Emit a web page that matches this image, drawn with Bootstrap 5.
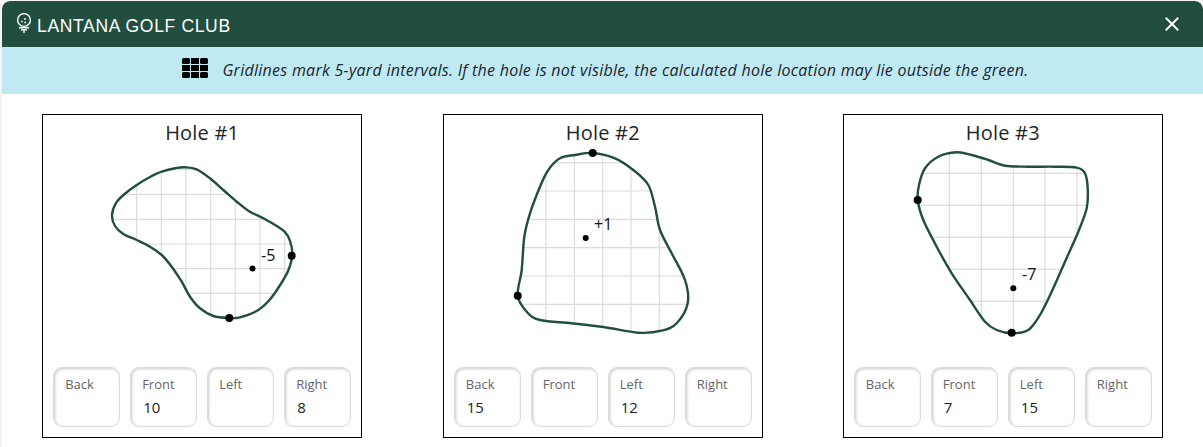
<!DOCTYPE html>
<html lang="en">
<head>
<meta charset="utf-8">
<title>Lantana Golf Club</title>
<link href="https://cdn.jsdelivr.net/npm/bootstrap@5.3.0/dist/css/bootstrap.min.css" rel="stylesheet">
<style>
html,body{height:447px;overflow:hidden;}
body{background:#f4f4f2;font-family:"Open Sans","Noto Sans",sans-serif;color:#212529;padding:1px 0 0 2px;}
.shell{border:0;border-radius:8px 8px 0 0;height:446px;overflow:hidden;background:#fff;}
.topbar{background:#214e3f;color:#fff;height:46px;padding:0 23px 0 14px;border:0;border-radius:8px 8px 0 0;}
.topbar .btn-close{opacity:1;}
.club{font-family:"Liberation Sans",sans-serif;font-size:17.5px;line-height:1;margin-top:5px;letter-spacing:.66px;}
.tee{width:16px;height:20px;margin-right:5px;margin-top:-8px;}
.notice{background:#bfeaf4;height:47px;padding:0 0 2px 6px;font-size:16px;letter-spacing:.27px;font-style:italic;border-radius:0;}
.grid-ico{width:26px;height:20px;margin-right:14px;margin-top:-3px;}
.holes{padding:20px 0 0;}
.holes>div{width:33.3333%;}
.hole{width:320px;height:324px;border:1px solid #000;border-radius:0;}
.mid-hole{margin-left:.6px;}
.hole h5{font-size:20px;letter-spacing:.2px;font-weight:400;line-height:24px;margin:6px 0 0;text-align:center;height:24px;}
.hole svg{display:block;width:318px;height:222px;}
.stats{gap:10px;padding:0 10px;}
.stat{width:67px;height:60px;border:1px solid #dcdcd8;border-radius:9px;box-shadow:inset 1px 1px 3px rgba(0,0,0,.22);padding:8px 0 0 11px;}
.stat span{display:block;font-size:13px;line-height:17px;color:#666;}
.stat b{display:block;font-weight:400;font-size:15px;line-height:18px;margin-top:5px;padding-left:1px;color:#222;}
.gridline{stroke:#dcdcd8;stroke-width:1.2;}
.edge{fill:none;stroke:#214e3f;stroke-width:2.4;}
.lbl{font-size:16px;fill:#111;font-family:"Open Sans",sans-serif;}
</style>
</head>
<body>
<div class="modal-content shell">
  <div class="modal-header topbar d-flex justify-content-between align-items-center">
    <div class="d-flex align-items-center club">
      <svg class="tee" viewBox="0 0 16 20" fill="none" stroke="#fff" stroke-width="1.4"><circle cx="8" cy="7" r="6.4"/><circle cx="6" cy="8.6" r=".9" fill="#fff" stroke="none"/><circle cx="9" cy="6" r=".9" fill="#fff" stroke="none"/><circle cx="9.2" cy="9.4" r=".9" fill="#fff" stroke="none"/><path d="M3 14.8h10M5 16.8h6M8 16.8V20"/></svg>
      LANTANA GOLF CLUB
    </div>
    <button type="button" class="btn-close btn-close-white" aria-label="Close"></button>
  </div>
  <div class="notice d-flex align-items-center justify-content-center">
    <svg class="grid-ico" viewBox="0 0 26 20" fill="#000"><rect x="0" y="0" width="8" height="6" rx="1.5"/><rect x="9" y="0" width="8" height="6"/><rect x="18" y="0" width="8" height="6" rx="1.5"/><rect x="0" y="7" width="8" height="6"/><rect x="9" y="7" width="8" height="6"/><rect x="18" y="7" width="8" height="6"/><rect x="0" y="14" width="8" height="6" rx="1.5"/><rect x="9" y="14" width="8" height="6"/><rect x="18" y="14" width="8" height="6" rx="1.5"/></svg>
    <span>Gridlines mark 5-yard intervals. If the hole is not visible, the calculated hole location may lie outside the green.</span>
  </div>
  <div class="holes d-flex">
    <div class="d-flex justify-content-center">
      <div class="card hole">
        <h5>Hole #1</h5>
        <svg class="green" viewBox="43 145 318 222"
          data-pts="112,215 116,203 124,194.5 136.7,185 150,177 161.7,171.7 175,168.3 185,167.3 196.7,169.3 210,178.3 223.3,190 236.7,201.7 248.3,210.7 263.3,218.3 276.7,226 285,232 290,241 292.3,254 288.5,270 279.5,286 269,300.5 256.7,311 240,317.3 229.3,318 213.3,316 200,308.3 190,296.7 181.7,281.7 171.7,266.7 161.7,255 150,246.7 136.7,240 123.3,234 115,226"
          data-xs="136.7 161.3 186 210.7 235.3 260 284.7" data-ys="169.7 194.3 219.3 244 268.7 293.3">
          <text class="lbl" x="261" y="260.5">-5</text>
          <circle cx="252.5" cy="268.5" r="3"/><circle cx="291.7" cy="255.7" r="4"/><circle cx="229.3" cy="318" r="4"/>
        </svg>
        <div class="stats d-flex">
          <div class="stat"><span>Back</span></div>
          <div class="stat"><span>Front</span><b>10</b></div>
          <div class="stat"><span>Left</span></div>
          <div class="stat"><span>Right</span><b>8</b></div>
        </div>
      </div>
    </div>
    <div class="d-flex justify-content-center">
      <div class="card hole mid-hole">
        <h5>Hole #2</h5>
        <svg class="green" viewBox="444 145 318 222"
          data-pts="592.7,153 615,158.3 633.3,170 648.3,185 655,206.7 660,230 671.7,253.3 685,280 687.7,303.3 676.7,323.3 661.7,330.7 638.3,332.7 605,327.3 571.7,323.3 540,320 526.7,311.7 517.7,295.7 521.7,270 524.3,236.7 530,213.3 540,186.7 548.3,170 560,158.3 575,155"
          data-xs="546 574.3 602.7 631 659.3" data-ys="162.7 191 219.3 247.7 276 304.3">
          <text class="lbl" x="594" y="229.5">+1</text>
          <circle cx="585.7" cy="238" r="3"/><circle cx="592.7" cy="153" r="4"/><circle cx="517.7" cy="295.7" r="4"/>
        </svg>
        <div class="stats d-flex">
          <div class="stat"><span>Back</span><b>15</b></div>
          <div class="stat"><span>Front</span></div>
          <div class="stat"><span>Left</span><b>12</b></div>
          <div class="stat"><span>Right</span></div>
        </div>
      </div>
    </div>
    <div class="d-flex justify-content-center">
      <div class="card hole">
        <h5>Hole #3</h5>
        <svg class="green" viewBox="844 145 318 222"
          data-pts="956.7,152.3 938.3,156.7 925,168.3 919,185 917.7,200 923.3,220 936.7,246.7 951.7,273.3 970,300 985,321.7 996.7,330 1011.7,333.3 1028.3,330 1040,315 1051.7,291.7 1065,261.7 1078.3,231.7 1086.7,208.3 1087.7,188.3 1085,173.3 1076.7,167.7 1055,166.7 1028.3,166.7 1005,165.7 988.3,160 971.7,155"
          data-xs="949.3 981.3 1013.3 1045 1077" data-ys="173.3 205.3 237.3 269.3 301.3 333.3">
          <text class="lbl" x="1022" y="279.5">-7</text>
          <circle cx="1013.3" cy="288.3" r="3"/><circle cx="917.7" cy="200" r="4"/><circle cx="1011.7" cy="332.7" r="4"/>
        </svg>
        <div class="stats d-flex">
          <div class="stat"><span>Back</span></div>
          <div class="stat"><span>Front</span><b>7</b></div>
          <div class="stat"><span>Left</span><b>15</b></div>
          <div class="stat"><span>Right</span></div>
        </div>
      </div>
    </div>
  </div>
</div>
<script src="https://cdn.jsdelivr.net/npm/bootstrap@5.3.0/dist/js/bootstrap.bundle.min.js"></script>
<script>
var NS='http://www.w3.org/2000/svg';
document.querySelectorAll('svg.green').forEach(function(svg,idx){
  var p=svg.dataset.pts.split(' ').map(function(s){return s.split(',').map(Number);});
  var n=p.length,d='M'+p[0].join(' ');
  for(var i=0;i<n;i++){
    var a=p[(i-1+n)%n],b=p[i],c=p[(i+1)%n],e=p[(i+2)%n];
    d+='C'+(b[0]+(c[0]-a[0])/6).toFixed(1)+' '+(b[1]+(c[1]-a[1])/6).toFixed(1)+' '+(c[0]-(e[0]-b[0])/6).toFixed(1)+' '+(c[1]-(e[1]-b[1])/6).toFixed(1)+' '+c[0]+' '+c[1];
  }
  d+='Z';
  var defs=document.createElementNS(NS,'clipPath');defs.id='clip'+idx;
  var cp=document.createElementNS(NS,'path');cp.setAttribute('d',d);defs.appendChild(cp);
  var g=document.createElementNS(NS,'g');g.setAttribute('clip-path','url(#clip'+idx+')');
  function line(x1,y1,x2,y2){var l=document.createElementNS(NS,'line');l.setAttribute('class','gridline');l.setAttribute('x1',x1);l.setAttribute('y1',y1);l.setAttribute('x2',x2);l.setAttribute('y2',y2);g.appendChild(l);}
  svg.dataset.xs.split(' ').forEach(function(x){line(x,0,x,500);});
  svg.dataset.ys.split(' ').forEach(function(y){line(0,y,2000,y);});
  var edge=document.createElementNS(NS,'path');edge.setAttribute('class','edge');edge.setAttribute('d',d);
  svg.insertBefore(edge,svg.firstChild);svg.insertBefore(g,edge);svg.insertBefore(defs,g);
});
</script>
</body>
</html>
